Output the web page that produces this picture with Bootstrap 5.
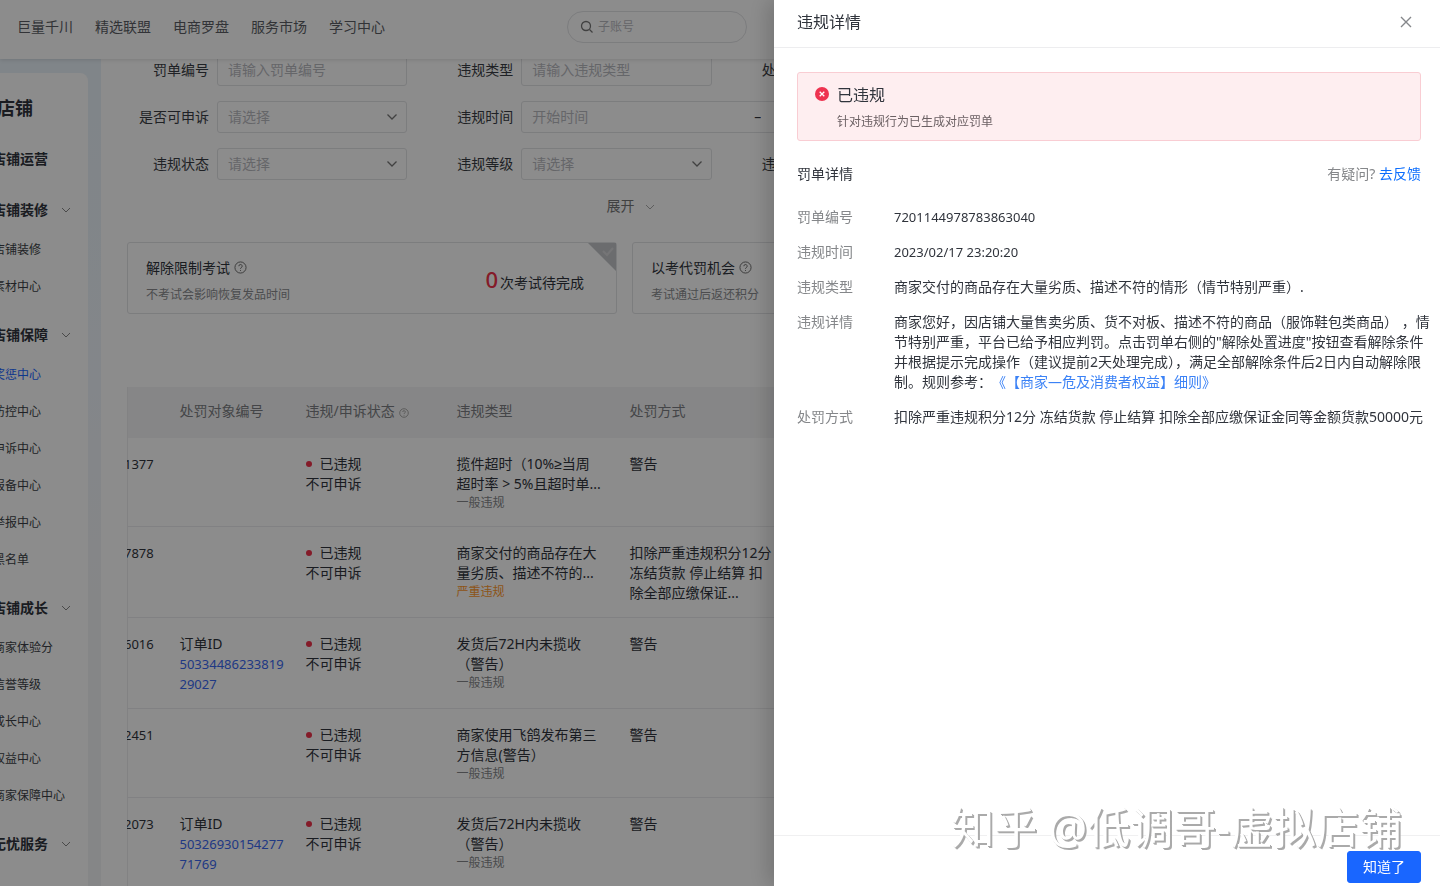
<!DOCTYPE html>
<html lang="zh-CN">
<head>
<meta charset="utf-8">
<meta name="viewport" content="width=device-width, initial-scale=1">
<title>违规详情</title>
<link href="https://cdn.jsdelivr.net/npm/bootstrap@5.3.0/dist/css/bootstrap.min.css" rel="stylesheet">
<style>
:root{--ink:#30343c;--muted:#85878a;--line:#e2e3e6;--blue:#1966ff;--hint:#b9babf}
body{font-family:"Noto Sans","Noto Sans CJK SC",sans-serif;font-size:14px;line-height:20px;color:var(--ink);background:#fff;height:100vh;overflow:hidden}
a{text-decoration:none}
.digits{font-size:13px}
.fine{font-size:12px;line-height:18px}
/* top bar */
.topbar{height:59px;padding:0 17px;box-shadow:0 1px 4px rgba(0,0,0,.12);position:relative;z-index:2}
.topbar .links{gap:22px}
.topbar .links a{color:#5b5e65}
.finder{width:180px;height:32px;margin:0 auto 0 182px;border:1px solid var(--line);border-radius:16px;padding:0 12px;color:#777}
.finder input{border:0;outline:0;width:100%;background:none;font-size:12px;padding:0}
::placeholder{color:var(--hint)!important;opacity:1}
/* side menu */
.side{width:101px;flex:none;padding:14px 13px 0 0;background:linear-gradient(#e9f2f9,#eff5fb 40%,#f3f4f6 65%)}
.side-panel{background:#fff;border-radius:0 8px 0 0;height:100%;overflow:hidden}
.side-title{font-size:18px;font-weight:700;line-height:24px;margin:23px 0 0 -3px}
.side-group{height:44px;margin-top:7px;margin-left:-8px;padding-right:17px;font-weight:700;white-space:nowrap}
.side-title + .side-group{margin-top:17px}
.side-item{height:37px;margin-left:-7px;font-size:12px;color:#3c3f46;white-space:nowrap;display:flex;align-items:center}
.side-item.active{color:var(--blue)}
/* content */
.content{min-width:0;padding:0 318px 0 26px;overflow:hidden}
.filters{display:grid;grid-template-columns:repeat(3,1fr);row-gap:15px;margin-top:-5px;padding-right:82px}
.filters > div{display:flex;align-items:center;min-width:0;padding-right:24px}
.filters label{width:82px;margin-right:8px;flex:none;text-align:right;color:#3a3d44}
.filters .wide{grid-column:span 2}
.field{font-size:14px;line-height:20px;height:32px;padding:0 10px;border:1px solid var(--line);border-radius:3px;background-color:#fff;min-width:0;color:var(--hint)}
select.field{background-size:12px;background-position:right 8px center;background-image:url("data:image/svg+xml,%3Csvg xmlns='http://www.w3.org/2000/svg' viewBox='0 0 12 12' fill='none' stroke='%23777' stroke-width='1.3'%3E%3Cpath d='M1.5 3.5 6 8l4.500-4.500'/%3E%3C/svg%3E")}
.range{height:32px;border:1px solid var(--line);border-radius:3px;width:100%}
.range input{border:0;outline:0;width:232px;padding:0 10px;font-size:14px}
.more{border:0;background:none;color:#777;gap:10px;margin:16px auto 0;padding:0 0 0 12px}
.exams{display:grid;grid-template-columns:1fr 1fr;gap:15px;margin-top:26px}
.exam{height:72px;border:1px solid var(--line);border-radius:3px;padding:6px 32px 0 18px;position:relative}
.exam .fine{color:#8a8b8f;margin-top:8px}
.count{font-size:22px;color:#f0324b;font-weight:500;margin-right:2px}
.corner{position:absolute;top:0;right:0}
.records-wrap{margin-top:73px;overflow:hidden}
.records{table-layout:fixed;width:100%;border-left:1px solid #ededee}
.records th{height:51px;background:#f5f5f6;font-weight:400;color:#7c7e83;padding:0 0 2px 16px}
.records td{vertical-align:top;padding:16px 0 14px 16px;white-space:nowrap;border-bottom:1px solid #ececee}
.records td:first-child{padding-left:0}
.tail{margin-left:-4px}
.records a{color:#3a68f0;display:block}
.dot{display:inline-block;width:6px;height:6px;border-radius:50%;background:#f0324b;margin:0 8px 2px 0}
.narrow-sign{font-family:"Liberation Sans",sans-serif}
.grade{color:#85878a}
.grade.severe{color:#ff9a2e}
/* drawer */
.offcanvas-backdrop.show{opacity:.45}
.drawer.offcanvas{--bs-offcanvas-width:666px;border:0;outline:0;transition:none;box-shadow:-6px 0 20px rgba(0,0,0,.18);color:var(--ink)}
.drawer-head{height:48px;padding:0 19px 0 23px;border-bottom:1px solid #ededef}
.drawer-head h1{font-size:16px;font-weight:400;line-height:24px;margin:0 0 3px}
.drawer-head button{border:0;background:none;padding:0;width:30px;height:24px;margin-bottom:3px}
.drawer-body{padding:24px 19px 0 23px;flex:1}
.notice{background:#feeef0;border:1px solid #f9cdd3;border-radius:3px;padding:10px 16px 0 17px;height:69px;gap:8px}
.notice h2{font-size:16px;font-weight:400;line-height:24px;margin:0}
.notice p{margin:6px 0 0;color:#6b6063}
.section-head{margin-top:23px}
.facts{display:grid;grid-template-columns:97px 1fr;row-gap:15px;margin:23px 0 0}
.facts dt{font-weight:400;color:#85878a}
.facts dd{margin:0;white-space:nowrap}
.facts a{text-spacing-trim:space-all;color:#3b82f6}
.drawer-foot{border-top:1px solid #f0f0f1;padding:15px 19px 3px}
.drawer-foot .btn{--bs-btn-bg:#1966ff;--bs-btn-border-color:#1966ff;width:74px;height:32px;font-size:14px;line-height:20px;padding:0;border-radius:3px}
.watermark{position:fixed;right:38px;bottom:30px;z-index:1100;font-size:43px;line-height:56px;color:#fff;text-shadow:1px 1px 0 #aaa,2px 2px 0 #aaa;pointer-events:none}
</style>
</head>
<body class="d-flex flex-column">
<header class="topbar d-flex align-items-center bg-white">
  <nav class="links d-flex mb-1">
    <a href="#">巨量千川</a><a href="#">精选联盟</a><a href="#">电商罗盘</a><a href="#">服务市场</a><a href="#">学习中心</a>
  </nav>
  <div class="finder d-flex align-items-center gap-1 mb-1">
    <svg width="14" height="14" viewBox="0 0 14 14" fill="none" stroke="currentColor" stroke-width="1.3" class="flex-shrink-0"><circle cx="6" cy="6" r="4.500"/><path d="m9.500 9.500 3 3"/></svg>
    <input type="text" placeholder="子账号" aria-label="搜索">
  </div>
</header>

<div class="d-flex flex-grow-1 overflow-hidden">
  <aside class="side">
    <div class="side-panel">
      <div class="side-title">店铺</div>
      <div class="side-group d-flex align-items-center">店铺运营</div>
      <div class="side-group d-flex align-items-center justify-content-between">店铺装修<svg width="10" height="10" viewBox="0 0 10 10" fill="none" stroke="#888"><path d="m1 3 4 4 4-4"/></svg></div>
      <a class="side-item" href="#">店铺装修</a>
      <a class="side-item" href="#">素材中心</a>
      <div class="side-group d-flex align-items-center justify-content-between">店铺保障<svg width="10" height="10" viewBox="0 0 10 10" fill="none" stroke="#888"><path d="m1 3 4 4 4-4"/></svg></div>
      <a class="side-item active" href="#">奖惩中心</a>
      <a class="side-item" href="#">防控中心</a>
      <a class="side-item" href="#">申诉中心</a>
      <a class="side-item" href="#">报备中心</a>
      <a class="side-item" href="#">举报中心</a>
      <a class="side-item" href="#">黑名单</a>
      <div class="side-group d-flex align-items-center justify-content-between">店铺成长<svg width="10" height="10" viewBox="0 0 10 10" fill="none" stroke="#888"><path d="m1 3 4 4 4-4"/></svg></div>
      <a class="side-item" href="#">商家体验分</a>
      <a class="side-item" href="#">信誉等级</a>
      <a class="side-item" href="#">成长中心</a>
      <a class="side-item" href="#">权益中心</a>
      <a class="side-item" href="#">商家保障中心</a>
      <div class="side-group d-flex align-items-center justify-content-between">无忧服务<svg width="10" height="10" viewBox="0 0 10 10" fill="none" stroke="#888"><path d="m1 3 4 4 4-4"/></svg></div>
    </div>
  </aside>

  <main class="content flex-grow-1">
    <form class="filters">
      <div><label for="f1">罚单编号</label><input id="f1" class="form-control field" placeholder="请输入罚单编号"></div>
      <div><label for="f2">违规类型</label><input id="f2" class="form-control field" placeholder="请输入违规类型"></div>
      <div><label for="f3">处罚方式</label><select id="f3" class="form-select field"><option>请选择</option></select></div>
      <div><label for="f4">是否可申诉</label><select id="f4" class="form-select field"><option>请选择</option></select></div>
      <div class="wide"><label for="f5">违规时间</label><div class="range d-flex align-items-center"><input id="f5" placeholder="开始时间">–<input aria-label="结束时间"></div></div>
      <div><label for="f6">违规状态</label><select id="f6" class="form-select field"><option>请选择</option></select></div>
      <div><label for="f7">违规等级</label><select id="f7" class="form-select field"><option>请选择</option></select></div>
      <div><label for="f8">违规来源</label><select id="f8" class="form-select field"><option>请选择</option></select></div>
    </form>
    <button type="button" class="more d-flex align-items-center">展开<svg width="10" height="10" viewBox="0 0 10 10" fill="none" stroke="#aaa"><path d="m1 4 4 4 4-4"/></svg></button>

    <section class="exams">
      <div class="exam d-flex align-items-center justify-content-between">
        <div>
          <div class="d-flex align-items-center gap-1">解除限制考试<svg width="13" height="13" viewBox="0 0 14 14" fill="none" stroke="#666"><circle cx="7" cy="7" r="6"/><path d="M5.200 5.600a1.800 1.800 0 1 1 2.600 1.600c-.6.300-.8.600-.8 1.200M7 9.700v1"/></svg></div>
          <div class="fine">不考试会影响恢复发品时间</div>
        </div>
        <div class="d-flex align-items-baseline"><span class="count">0</span>次考试待完成</div>
        <svg class="corner" width="28" height="28" viewBox="0 0 28 28"><path d="M0 0h28v28z" fill="#c4c5c8"/><path d="m15 8 4 4 6-7" fill="none" stroke="#d6d6d9" stroke-width="2"/></svg>
      </div>
      <div class="exam d-flex align-items-center justify-content-between">
        <div>
          <div class="d-flex align-items-center gap-1">以考代罚机会<svg width="13" height="13" viewBox="0 0 14 14" fill="none" stroke="#666"><circle cx="7" cy="7" r="6"/><path d="M5.200 5.600a1.800 1.800 0 1 1 2.600 1.600c-.6.300-.8.600-.8 1.200M7 9.700v1"/></svg></div>
          <div class="fine">考试通过后返还积分</div>
        </div>
      </div>
    </section>

    <div class="records-wrap">
    <table class="records">
      <colgroup><col width="36"><col width="126"><col width="151"><col width="173"><col></colgroup>
      <thead><tr><th></th><th>处罚对象编号</th><th>违规/申诉状态<svg width="10" height="10" class="ms-1" viewBox="0 0 14 14" fill="none" stroke="#888"><circle cx="7" cy="7" r="6"/><path d="M5.200 5.600a1.800 1.800 0 1 1 2.600 1.600c-.6.300-.8.600-.8 1.200M7 9.700v1"/></svg></th><th>违规类型</th><th>处罚方式</th></tr></thead>
      <tbody>
        <tr><td><div class="tail digits">1377</div></td><td></td><td><span class="dot"></span>已违规<br>不可申诉</td><td>揽件超时（10%<span class="narrow-sign">≥</span>当周<br>超时率 &gt; 5%且超时单...<div class="fine grade">一般违规</div></td><td>警告</td></tr>
        <tr><td><div class="tail digits">7878</div></td><td></td><td><span class="dot"></span>已违规<br>不可申诉</td><td>商家交付的商品存在大<br>量劣质、描述不符的...<div class="fine grade severe">严重违规</div></td><td>扣除严重违规积分12分<br>冻结货款 停止结算 扣<br>除全部应缴保证...</td></tr>
        <tr><td><div class="tail digits">6016</div></td><td>订单ID<a href="#" class="digits">50334486233819<br>29027</a></td><td><span class="dot"></span>已违规<br>不可申诉</td><td>发货后72H内未揽收<br>（警告）<div class="fine grade">一般违规</div></td><td>警告</td></tr>
        <tr><td><div class="tail digits">2451</div></td><td></td><td><span class="dot"></span>已违规<br>不可申诉</td><td>商家使用飞鸽发布第三<br>方信息(警告）<div class="fine grade">一般违规</div></td><td>警告</td></tr>
        <tr><td><div class="tail digits">2073</div></td><td>订单ID<a href="#" class="digits">50326930154277<br>71769</a></td><td><span class="dot"></span>已违规<br>不可申诉</td><td>发货后72H内未揽收<br>（警告）<div class="fine grade">一般违规</div></td><td>警告</td></tr>
      </tbody>
    </table>
    </div>
  </main>
</div>

<div class="offcanvas-backdrop show"></div>
<div class="offcanvas offcanvas-end show drawer" data-bs-backdrop="false" data-bs-scroll="true" tabindex="-1" role="dialog" aria-labelledby="drawerTitle">
  <div class="drawer-head d-flex align-items-center justify-content-between">
    <h1 id="drawerTitle">违规详情</h1>
    <button type="button" aria-label="关闭" class="d-flex align-items-center justify-content-center"><svg width="12" height="12" viewBox="0 0 12 12" stroke="#85878a" stroke-width="1.400"><path d="m1 1 10 10M11 1 1 11"/></svg></button>
  </div>
  <div class="drawer-body">
    <div class="notice d-flex align-items-start">
      <svg width="14" height="14" viewBox="0 0 14 14" class="flex-shrink-0 mt-1"><circle cx="7" cy="7" r="7" fill="#ee3350"/><path d="m4.700 4.700 4.600 4.600m0-4.600L4.700 9.300" stroke="#fff" stroke-width="1.300"/></svg>
      <div><h2>已违规</h2><p class="fine">针对违规行为已生成对应罚单</p></div>
    </div>
    <div class="section-head d-flex justify-content-between">
      <span>罚单详情</span>
      <span class="text-nowrap"><span class="grade">有疑问?</span> <a href="#">去反馈</a></span>
    </div>
    <dl class="facts">
      <dt>罚单编号</dt><dd class="digits">7201144978783863040</dd>
      <dt>违规时间</dt><dd class="digits">2023/02/17 23:20:20</dd>
      <dt>违规类型</dt><dd>商家交付的商品存在大量劣质、描述不符的情形（情节特别严重）.</dd>
      <dt>违规详情</dt><dd>商家您好，因店铺大量售卖劣质、货不对板、描述不符的商品（服饰鞋包类商品） ，情<br>节特别严重，平台已给予相应判罚。点击罚单右侧的"解除处置进度"按钮查看解除条件<br>并根据提示完成操作（建议提前2天处理完成），满足全部解除条件后2日内自动解除限<br>制。规则参考：<a href="#">《【商家—危及消费者权益】细则》</a></dd>
      <dt>处罚方式</dt><dd>扣除严重违规积分12分 冻结货款 停止结算 扣除全部应缴保证金同等金额货款50000元</dd>
    </dl>
  </div>
  <div class="drawer-foot d-flex justify-content-end">
    <button type="button" class="btn btn-primary">知道了</button>
  </div>
</div>
<div class="watermark">知乎 @低调哥-虚拟店铺</div>
<script src="https://cdn.jsdelivr.net/npm/bootstrap@5.3.0/dist/js/bootstrap.bundle.min.js"></script>
</body>
</html>
